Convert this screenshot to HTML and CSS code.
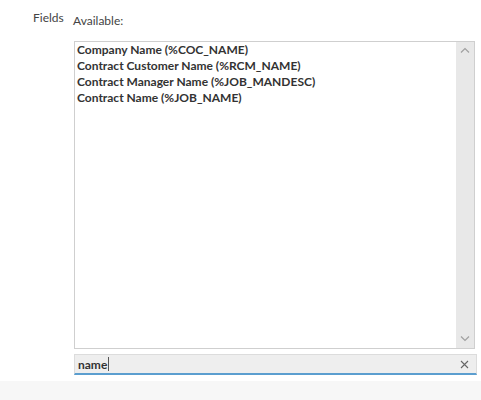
FILE: index.html
```html
<!DOCTYPE html>
<html>
<head>
<meta charset="utf-8">
<link rel="stylesheet" href="styles.css">
</head>
<body>
<div class="page">
  <div class="row">
    <div class="label">Fields</div>
    <div class="field">
      <div class="caption">Available:</div>
      <div class="listbox">
        <ul class="items">
          <li>Company Name (%COC_NAME)</li>
          <li>Contract Customer Name (%RCM_NAME)</li>
          <li>Contract Manager Name (%JOB_MANDESC)</li>
          <li>Contract Name (%JOB_NAME)</li>
        </ul>
        <div class="scrollbar">
          <svg class="arrow" width="10" height="6" viewBox="0 0 10 6"><path d="M1 5.5 L5 1.5 L9 5.5" fill="none" stroke="#a0a0a0" stroke-width="1.2"/></svg>
          <svg class="arrow" width="10" height="6" viewBox="0 0 10 6"><path d="M1 0.5 L5 4.5 L9 0.5" fill="none" stroke="#a0a0a0" stroke-width="1.2"/></svg>
        </div>
      </div>
      <div class="search">
        <span class="query">name</span><span class="caret"></span>
        <svg class="clear" width="9" height="9" viewBox="0 0 9 9"><path d="M1 1 L8 8 M8 1 L1 8" stroke="#666" stroke-width="1.1"/></svg>
      </div>
    </div>
  </div>
</div>
<div class="footer"></div>
</body>
</html>
```
FILE: styles.css
```css
html, body { margin: 0; padding: 0; background: #fff; }
body { font-family: Lato, "Noto Sans", sans-serif; color: #333; }
.page { height: 381px; background: #fff; }
.row { display: flex; padding-top: 10px; }
.label { width: 33px; margin-left: 33px; font-size: 12px; color: #444; line-height: 16px; padding-top: 0; }
.field { margin-left: 7px; width: 404px; }
.caption { font-size: 12px; color: #444; line-height: 16px; padding-top: 3px; }
.listbox { margin-top: 12px; margin-left: 1px; width: 401px; height: 308px; border: 1px solid #cfcfcf; display: flex; box-sizing: border-box; background: #fff; }
.items { list-style: none; margin: 0; padding: 0 0 0 2px; flex: 1; font-size: 12px; font-weight: bold; color: #333; line-height: 16px; }
.scrollbar { width: 18px; background: #e8e8e8; display: flex; flex-direction: column; justify-content: space-between; align-items: center; padding: 5px 0 6px; box-sizing: border-box; }
.arrow { display: block; }
.search { margin-top: 5px; margin-left: 1px; width: 403px; height: 21px; box-sizing: border-box; background: #eeeeee; border: 1px solid #dcdcdc; border-bottom: 2px solid #5b9ecf; display: flex; align-items: center; padding-left: 3px; position: relative; }
.query { font-size: 12px; font-weight: bold; color: #333; }
.caret { display: inline-block; width: 1px; height: 14px; background: #555; margin-left: 1px; }
.clear { position: absolute; right: 7px; top: 5px; }
.footer { height: 19px; background: #f7f7f7; }
```
